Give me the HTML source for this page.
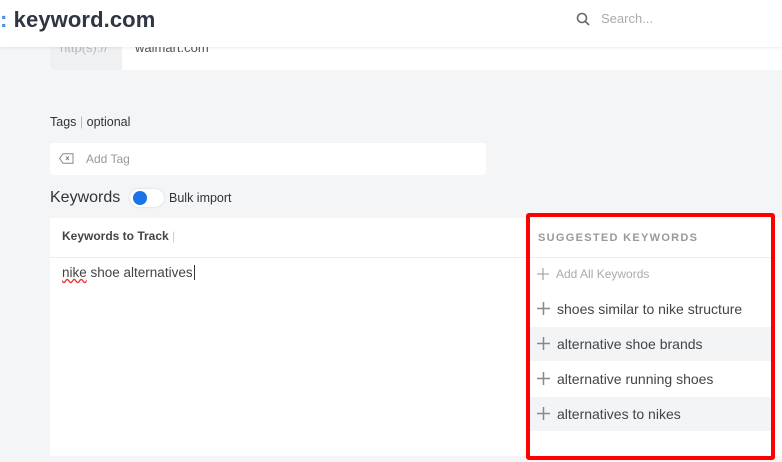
<!DOCTYPE html>
<html><head><meta charset="utf-8"><style>
*{margin:0;padding:0;box-sizing:border-box}
body{width:782px;height:462px;overflow:hidden;background:#f4f5f7;font-family:"Liberation Sans",sans-serif;position:relative;color:#333}
.abs{position:absolute}
.sg{position:absolute;left:557px;font-size:14px;color:#444;line-height:20px}
.pl{position:absolute;left:537px}
</style></head><body>
<div class="abs" style="left:50px;top:30px;width:72px;height:40px;background:#eef0f2;border-radius:6px 0 0 6px"></div>
<div class="abs" style="left:60px;top:40px;font-size:13px;color:#bbb">http(s)://</div>
<div class="abs" style="left:122px;top:30px;width:660px;height:40px;background:#fff"></div>
<div class="abs" style="left:135px;top:40px;font-size:13px;color:#555">walmart.com</div>
<div class="abs" style="left:0;top:0;width:782px;height:47px;background:#fff;box-shadow:0 1px 3px rgba(0,0,0,.08)"></div>
<div class="abs" style="left:0;top:7px;font-size:22px;font-weight:bold;color:#2f3542;letter-spacing:0.1px"><span style="color:#4a90e2">:</span> keyword.com</div>
<svg class="abs" style="left:576px;top:12px" width="14" height="14" viewBox="0 0 14 14"><circle cx="6" cy="6" r="4.5" fill="none" stroke="#666" stroke-width="1.6"/><path d="M9.3 9.3L13 13" stroke="#666" stroke-width="1.6"/></svg>
<div class="abs" style="left:601px;top:11px;font-size:13px;color:#aaa">Search...</div>

<div class="abs" style="left:50px;top:115px;font-size:12.5px;color:#333">Tags <span style="color:#bbb">|</span> optional</div>
<div class="abs" style="left:50px;top:143px;width:436px;height:32px;background:#fff;border-radius:3px"></div>
<svg class="abs" style="left:59px;top:153px" width="15" height="11" viewBox="0 0 15 11"><path d="M4 0.7H14V10.3H4L0.7 5.5Z" fill="none" stroke="#888" stroke-width="1"/><path d="M7 3.5L10 7M10 3.5L7 7" stroke="#888" stroke-width="1"/></svg>
<div class="abs" style="left:86px;top:152px;font-size:12px;color:#999">Add Tag</div>

<div class="abs" style="left:50px;top:189px;font-size:16px;color:#333">Keywords</div>
<div class="abs" style="left:130px;top:189px;width:34px;height:18px;border-radius:9px;background:#fff;box-shadow:0 0 2px rgba(0,0,0,.15)"></div>
<div class="abs" style="left:133px;top:191px;width:14px;height:14px;border-radius:50%;background:#1a73e8"></div>
<div class="abs" style="left:169px;top:191px;font-size:12.5px;color:#333">Bulk import</div>

<div class="abs" style="left:50px;top:218px;width:732px;height:238px;background:#fff"></div>
<div class="abs" style="left:50px;top:257px;width:476px;height:1px;background:#eee"></div>
<div class="abs" style="left:62px;top:229px;font-size:12px;font-weight:bold;color:#444">Keywords to Track <span style="color:#ccc;font-weight:normal">|</span></div>
<div class="abs" style="left:62px;top:265px;font-size:13.5px;color:#444"><span style="text-decoration:underline wavy #e33">nike</span> shoe alternatives<span style="border-left:1px solid #333;margin-left:1px"></span></div>

<div class="abs" style="left:526px;top:213px;width:249px;height:247px;border:4px solid #f00;border-radius:3px;background:#fff"></div>
<div class="abs" style="left:538px;top:232px;font-size:11px;font-weight:bold;letter-spacing:1.3px;color:#999">SUGGESTED KEYWORDS</div>
<div class="abs" style="left:530px;top:257px;width:241px;height:1px;background:#eee"></div>
<div class="abs" style="left:530px;top:327px;width:241px;height:34px;background:#f3f4f6"></div>
<div class="abs" style="left:530px;top:397px;width:241px;height:34px;background:#f3f4f6"></div>
<svg class="pl" style="top:268px" width="12" height="12" viewBox="0 0 12 12"><path d="M6 0V12M0 6H12" stroke="#aaa" stroke-width="1.3"/></svg>
<div class="abs" style="left:556px;top:267px;font-size:12px;color:#aaa">Add All Keywords</div>
<svg class="pl" style="top:302px" width="13" height="13" viewBox="0 0 13 13"><path d="M6.5 0V13M0 6.5H13" stroke="#888" stroke-width="1.5"/></svg>
<div class="sg" style="top:299px">shoes similar to nike structure</div>
<svg class="pl" style="top:337px" width="13" height="13" viewBox="0 0 13 13"><path d="M6.5 0V13M0 6.5H13" stroke="#888" stroke-width="1.5"/></svg>
<div class="sg" style="top:334px">alternative shoe brands</div>
<svg class="pl" style="top:372px" width="13" height="13" viewBox="0 0 13 13"><path d="M6.5 0V13M0 6.5H13" stroke="#888" stroke-width="1.5"/></svg>
<div class="sg" style="top:369px">alternative running shoes</div>
<svg class="pl" style="top:407px" width="13" height="13" viewBox="0 0 13 13"><path d="M6.5 0V13M0 6.5H13" stroke="#888" stroke-width="1.5"/></svg>
<div class="sg" style="top:404px">alternatives to nikes</div>
</body></html>
